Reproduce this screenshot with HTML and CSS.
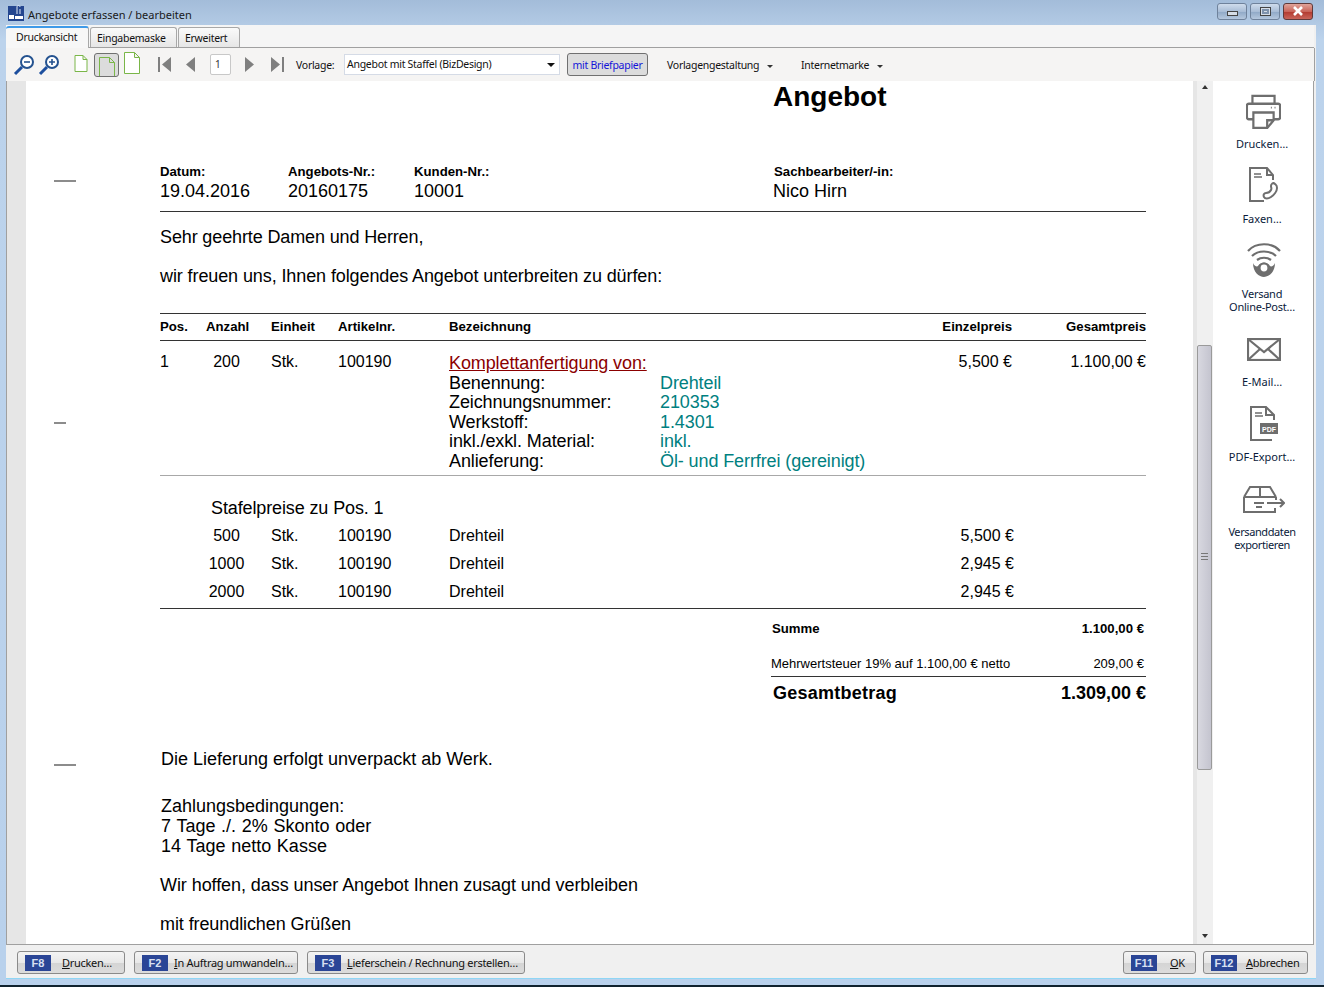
FILE: index.html
```html
<!DOCTYPE html>
<html lang="de">
<head>
    <meta charset="UTF-8">
    <title>Angebote erfassen / bearbeiten</title>
    <link rel="stylesheet" href="styles.css">
</head>
<body>
<div class="window">
    <div class="titlebar">
        <svg class="app-icon" width="16" height="16" viewBox="0 0 16 16"><rect y="1" width="16" height="15" fill="#24468f"/><path d="M9 9V2c0-2 3-2 3 0M12 9V4" stroke="#dfe8f5" fill="none"/><rect x="1" y="10" width="5" height="4" fill="#fff"/><rect x="7" y="11" width="8" height="3" fill="#fff"/></svg>
        <span class="title-text">Angebote erfassen / bearbeiten</span>
        <div class="win-buttons">
            <span class="win-btn"><i class="glyph-min"></i></span>
            <span class="win-btn"><i class="glyph-max"></i></span>
            <span class="win-btn win-close">
                <svg width="14" height="10" viewBox="0 0 14 10"><path d="M3 1l8 8M11 1L3 9" stroke="#fff" stroke-width="2.6"/></svg>
            </span>
        </div>
    </div>

    <div class="frame">
        <div class="tabs">
            <span class="tab tab-active">Druckansicht</span>
            <span class="tab tab-input">Eingabemaske</span>
            <span class="tab tab-more">Erweitert</span>
        </div>

        <div class="toolbar">
            <svg class="tool-icon" width="23" height="22" viewBox="0 0 23 22"><circle cx="14" cy="8" r="6" fill="#fff" stroke="#24528f" stroke-width="2"/><path d="M11 8h6" stroke="#24528f" stroke-width="1.6"/><path d="M9 13l-7 7" stroke="#1d4f9e" stroke-width="3"/></svg>
            <svg class="tool-icon" width="23" height="22" viewBox="0 0 23 22"><circle cx="14" cy="8" r="6" fill="#fff" stroke="#24528f" stroke-width="2"/><path d="M11 8h6M14 5v6" stroke="#24528f" stroke-width="1.6"/><path d="M9 13l-7 7" stroke="#1d4f9e" stroke-width="3"/></svg>
            <svg class="page-small" width="14" height="17" viewBox="0 0 14 17"><path d="M1 .5h8l4 4v12H1z M9 .5v4h4" fill="#fff" stroke="#7ab648"/></svg>
            <span class="page-toggle">
                <svg width="16" height="22" viewBox="0 0 16 22"><path d="M.5 3.500h10l5 5v14H.5z M10.500 3.500v5h5" fill="none" stroke="#7ab648"/></svg>
            </span>
            <svg class="page-large" width="16" height="22" viewBox="0 0 16 22"><path d="M.5.5h10l5 5v16H.5z M10.500.5v5h5" fill="#fff" stroke="#7ab648"/></svg>

            <svg class="nav-first" width="14" height="15" viewBox="0 0 14 15"><path d="M0 0h2v15H0z M13 0v15L4 7.500z" fill="#7f7f7f"/></svg>
            <svg class="nav-prev" width="9" height="15" viewBox="0 0 9 15"><path d="M9 0v15L0 7.500z" fill="#7f7f7f"/></svg>
            <span class="page-input">1</span>
            <svg class="nav-next" width="9" height="15" viewBox="0 0 9 15"><path d="M0 0v15l9-7.500z" fill="#7f7f7f"/></svg>
            <svg class="nav-last" width="14" height="15" viewBox="0 0 14 15"><path d="M12 0h2v15h-2z M1 0v15l9-7.500z" fill="#7f7f7f"/></svg>

            <span class="tool-label">Vorlage:</span>
            <span class="combo">Angebot mit Staffel (BizDesign)<i class="caret-big"></i></span>
            <span class="letterhead-btn">mit Briefpapier</span>
            <span class="menu-btn menu-design">Vorlagengestaltung<i class="caret"></i></span>
            <span class="menu-btn">Internetmarke<i class="caret"></i></span>
        </div>

        <div class="main">
            <div class="doc-gutter"></div>
            <div class="doc">
                <i class="fold fold-1"></i>
                <i class="fold fold-2"></i>
                <i class="fold fold-3"></i>

                <div class="doc-title">Angebot</div>

                <div class="meta">
                    <div><b>Datum:</b><span>19.04.2016</span></div>
                    <div><b>Angebots-Nr.:</b><span>20160175</span></div>
                    <div><b>Kunden-Nr.:</b><span>10001</span></div>
                    <div><b class="meta-clerk">Sachbearbeiter/-in:</b><span>Nico Hirn</span></div>
                </div>

                <p class="salutation">Sehr geehrte Damen und Herren,</p>
                <p class="intro">wir freuen uns, Ihnen folgendes Angebot unterbreiten zu dürfen:</p>

                <div class="pos-row pos-head">
                    <span>Pos.</span><span>Anzahl</span><span>Einheit</span><span>Artikelnr.</span><span>Bezeichnung</span>
                    <span class="right">Einzelpreis</span><span class="right">Gesamtpreis</span>
                </div>

                <div class="pos-row pos-main">
                    <span>1</span><span class="qty">200</span><span>Stk.</span><span>100190</span>
                    <div class="desc">
                        <div class="desc-head">Komplettanfertigung von:</div>
                        <dl class="desc-list">
                            <dt>Benennung:</dt><dd>Drehteil</dd>
                            <dt>Zeichnungsnummer:</dt><dd>210353</dd>
                            <dt>Werkstoff:</dt><dd>1.4301</dd>
                            <dt>inkl./exkl. Material:</dt><dd>inkl.</dd>
                            <dt>Anlieferung:</dt><dd>Öl- und Ferrfrei (gereinigt)</dd>
                        </dl>
                    </div>
                    <span class="right">5,500 €</span><span class="right">1.100,00 €</span>
                </div>

                <div class="staffel">
                    <div class="staffel-title">Stafelpreise zu Pos. 1</div>
                    <div class="pos-row staffel-row"><span></span><span class="qty">500</span><span>Stk.</span><span>100190</span><span>Drehteil</span><span class="right price-off">5,500 €</span><span></span></div>
                    <div class="pos-row staffel-row"><span></span><span class="qty">1000</span><span>Stk.</span><span>100190</span><span>Drehteil</span><span class="right price-off">2,945 €</span><span></span></div>
                    <div class="pos-row staffel-row"><span></span><span class="qty">2000</span><span>Stk.</span><span>100190</span><span>Drehteil</span><span class="right price-off">2,945 €</span><span></span></div>
                </div>

                <div class="totals">
                    <div class="total-row total-sum"><span>Summe</span><span>1.100,00 €</span></div>
                    <div class="total-row total-tax"><span>Mehrwertsteuer 19% auf 1.100,00 € netto</span><span>209,00 €</span></div>
                    <div class="total-row total-grand"><span class="grand-label">Gesamtbetrag</span><span>1.309,00 €</span></div>
                </div>

                <div class="closing">
                    <p class="closing-1">Die Lieferung erfolgt unverpackt ab Werk.</p>
                    <p class="closing-2">Zahlungsbedingungen:<br>7 Tage ./. 2% Skonto oder<br>14 Tage netto Kasse</p>
                    <p class="closing-3">Wir hoffen, dass unser Angebot Ihnen zusagt und verbleiben</p>
                    <p class="closing-4">mit freundlichen Grüßen</p>
                </div>
            </div>

            <div class="scrollbar">
                <i class="arrow-up"></i>
                <div class="thumb"><i class="grip"></i></div>
                <i class="arrow-down"></i>
            </div>

            <div class="actions">
                <div class="action action-print">
                    <svg width="35" height="35" viewBox="0 0 38 36" preserveAspectRatio="none" fill="none" stroke="#6e6e6e" stroke-width="2.400"><path d="M7 10V2h24v8"/><path d="M8 26H3a2 2 0 0 1-2-2V12a2 2 0 0 1 2-2h32a2 2 0 0 1 2 2v12a2 2 0 0 1-2 2h-5"/><path d="M8 19h22v8l-7 8H8z"/><path d="M23 35v-8h7"/><path d="M27 14h1M31 14h1" stroke-width="2"/></svg>
                    <span>Drucken…</span>
                </div>
                <div class="action action-fax">
                    <svg width="32" height="36" viewBox="0 0 32 36" fill="none" stroke="#6e6e6e" stroke-width="2"><path d="M16 34H2V1h17l6 7v5"/><path d="M19 1v7h6"/><path d="M6 7h7M6 10h8" stroke-width="1.500"/><path d="M27 17c-2-2-4 0-4 2s1 2 0 4-3 3-5 3-3 2-2 4 4 2 7 0 6-6 6-9-1-3-2-4z"/></svg>
                    <span>Faxen…</span>
                </div>
                <div class="action action-post">
                    <svg width="34" height="36" viewBox="0 0 34 36" fill="none" stroke="#6e6e6e" stroke-width="2.200"><path d="M1 9C9 0 25 0 33 9"/><path d="M5 14c6-6 18-6 24 0"/><path d="M10 18c4-3 10-3 14 0"/><path d="M6 21c0 9 6 14 11 14s11-5 11-14c-1 3-4 4-5 3a7 7 0 0 0-12 0c-1 1-4 0-5-3z" fill="#6e6e6e" stroke="none"/><circle cx="17" cy="26" r="4.500" fill="#fff" stroke="#6e6e6e"/></svg>
                    <span>Versand<br>Online-Post…</span>
                </div>
                <div class="action action-mail">
                    <svg width="34" height="23" viewBox="0 0 34 23" fill="none" stroke="#6e6e6e" stroke-width="2.200"><rect x="1" y="1" width="32" height="21"/><path d="M1 1l16 13L33 1M1 22l12-11M33 22L21 11"/></svg>
                    <span>E-Mail…</span>
                </div>
                <div class="action action-pdf">
                    <svg width="28" height="35" viewBox="0 0 28 35" fill="none" stroke="#6e6e6e" stroke-width="2"><path d="M22 34H1V1h15l8 8v5"/><path d="M16 1v8h8"/><path d="M5 7h7M5 10h8" stroke-width="1.500"/><rect x="10" y="17" width="18" height="11" fill="#6e6e6e" stroke="none"/><text x="19" y="25.500" class="pdf-tag">PDF</text></svg>
                    <span>PDF-Export…</span>
                </div>
                <div class="action action-ship">
                    <svg width="42" height="28" viewBox="0 0 42 28" fill="none" stroke="#6e6e6e" stroke-width="2"><path d="M1 11L7 1h20l6 10"/><path d="M17 1v10M1 11h32"/><path d="M1 11v15h31v-4M33 11v3"/><path d="M11 17h10M13 21h6M24 17h17M37 13l4 4-4 4"/></svg>
                    <span>Versanddaten<br>exportieren</span>
                </div>
            </div>
        </div>

        <div class="footer">
            <span class="fkey-btn btn-print"><b>F8</b><span><u>D</u>rucken…</span></span>
            <span class="fkey-btn btn-order"><b>F2</b><span><u>I</u>n Auftrag umwandeln…</span></span>
            <span class="fkey-btn btn-invoice"><b>F3</b><span><u>L</u>ieferschein / Rechnung erstellen…</span></span>
            <span class="fkey-btn btn-ok"><b>F11</b><span><u>O</u>K</span></span>
            <span class="fkey-btn btn-cancel"><b>F12</b><span><u>A</u>bbrechen</span></span>
        </div>
    </div>
</div>
</body>
</html>
```

FILE: styles.css
```css
* {
    box-sizing: border-box;
}
html, body {
    margin: 0;
    padding: 0;
}
body {
    width: 1324px;
    height: 987px;
    overflow: hidden;
    font-family: "Noto Sans", sans-serif;
    font-size: 11px;
    color: #111;
}
.window {
    height: 987px;
    display: flex;
    flex-direction: column;
    background: linear-gradient(180deg, #a3bcd9 0, #bcd3ec 40px, #b9d1ec 100%);
    padding: 0 8px 6px 6px;
    border-bottom: 2px solid #10222e;
}
.titlebar {
    height: 25px;
    flex: none;
    display: flex;
    align-items: center;
    padding: 0 3px 0 2px;
}
.app-icon {
    margin-right: 4px;
}
.title-text {
    font-size: 11px;
    color: #1a1a1a;
    margin-top: 3px;
}
.win-buttons {
    margin-left: auto;
    margin-top: -3px;
    display: flex;
    gap: 3px;
}
.win-btn {
    width: 30px;
    height: 17px;
    border: 1px solid #6f829b;
    border-radius: 3px;
    background: linear-gradient(180deg, #cfdcec, #a9bdd6 50%, #8fa8c6 52%, #b5c8de);
    display: flex;
    align-items: center;
    justify-content: center;
}
.win-close {
    border-color: #5f3a3a;
    background: linear-gradient(180deg, #e0a49a, #c9655a 50%, #b23a2f 52%, #c9655a);
}
.glyph-min {
    width: 11px;
    height: 5px;
    margin-top: 5px;
    background: #d6dde6;
    border: 1px solid #444;
}
.glyph-max {
    width: 11px;
    height: 9px;
    background: #d6dde6;
    border: 1px solid #444;
    box-shadow: inset 0 0 0 1px #d6dde6, inset 0 0 0 3px #7e92ac;
}
.frame {
    flex: 1;
    min-height: 0;
    display: flex;
    flex-direction: column;
    background: #f0f0f0;
    border-bottom: 1px solid #8fd6f5;
}

/* tabs */
.tabs {
    height: 23px;
    flex: none;
    display: flex;
    align-items: flex-end;
    background: #f5f5f5;
    gap: 1px;
    border-bottom: 1px solid #a0a0a0;
    margin-right: 2px;
    font-size: 10.5px;
    letter-spacing: -0.28px;
}
.tab {
    height: 20px;
    padding-left: 6px;
    line-height: 20px;
    background: linear-gradient(180deg, #fafafa, #e6e6e6);
    border: 1px solid #a8a8a8;
    border-bottom: none;
    border-radius: 3px 3px 0 0;
}
.tab-active {
    height: 22px;
    width: 83px;
    padding-left: 10px;
    background: #f7f7f7;
    border: none;
    border-top: 2px solid #3f9ae8;
    border-right: 1px solid #a8a8a8;
    margin-bottom: -1px;
    line-height: 19px;
}
.tab-input {
    width: 87px;
}
.tab-more {
    width: 62px;
}
.toolbar {
    height: 33px;
    flex: none;
    display: flex;
    align-items: center;
    background: #f5f4f3;
    border-right: 1px solid #a0a0a0;
    margin-right: 1px;
    padding-left: 7px;
    font-size: 10.5px;
    letter-spacing: -0.28px;
}
.tool-icon {
    margin-right: 2px;
}
.page-small {
    margin-left: 11px;
    margin-top: -2px;
}
.page-toggle {
    width: 25px;
    height: 24px;
    margin-left: 6px;
    border: 1px solid #707070;
    border-radius: 3px;
    background: #dcdcdc;
    display: flex;
    justify-content: center;
    overflow: hidden;
}
.page-large {
    margin-left: 5px;
    margin-top: -3px;
}
.nav-first {
    margin-left: 18px;
}
.nav-prev {
    margin-left: 14px;
}
.page-input {
    width: 21px;
    height: 21px;
    margin-left: 15px;
    background: #fff;
    border: 1px solid #c8c8c8;
    border-radius: 2px;
    font-size: 10px;
    line-height: 19px;
    padding-left: 4px;
    color: #333;
}
.nav-next {
    margin-left: 14px;
}
.nav-last {
    margin-left: 16px;
}
.tool-label {
    width: 40px;
    margin-left: 12px;
}
.combo {
    position: relative;
    width: 216px;
    height: 21px;
    margin-left: 8px;
    background: #fff;
    border: 1px solid #d5dbe6;
    line-height: 18px;
    padding-left: 2px;
}
.caret-big {
    position: absolute;
    right: 4px;
    top: 8px;
    border: 4px solid transparent;
    border-top: 4px solid #111;
    border-bottom: none;
}
.letterhead-btn {
    width: 81px;
    height: 23px;
    margin-left: 7px;
    border: 1px solid #707070;
    border-radius: 3px;
    background: #dcdcdc;
    color: #1414d8;
    text-align: center;
    line-height: 22px;
}
.menu-btn {
    white-space: nowrap;
}
.menu-design {
    width: 134px;
    margin-left: 19px;
}
.caret {
    display: inline-block;
    margin-left: 8px;
    margin-bottom: 1px;
    border: 3px solid transparent;
    border-top: 3px solid #333;
    border-bottom: none;
}

/* main area */
.main {
    height: 864px;
    flex: none;
    display: flex;
    overflow: hidden;
    background: #fff;
    border-right: 1px solid #a0a0a0;
    border-bottom: 1px solid #a0a0a0;
    border-left: 1px solid #a0a0a0;
    margin-right: 2px;
}
.doc-gutter {
    width: 19px;
    flex: none;
    background: #e6e6e6;
}
.doc {
    position: relative;
    width: 1167px;
    flex: none;
    padding-left: 134px;
    padding-right: 47px;
    font-family: "Liberation Sans", Arial, sans-serif;
    font-size: 18px;
    color: #000;
    background: #fff;
}
.fold {
    position: absolute;
    height: 2px;
    background: #8c8c8c;
    left: 28px;
    width: 22px;
}
.fold-1 { top: 99px; }
.fold-2 { top: 341px; width: 12px; }
.fold-3 { top: 683px; }
.doc-title {
    height: 32px;
    margin-left: 613px;
    font-size: 28px;
    font-weight: bold;
    line-height: 32px;
}
.meta {
    margin-top: 50px;
    height: 49px;
    display: grid;
    grid-template-columns: 128px 126px 359px 1fr;
    border-bottom: 1px solid #333;
}
.meta div {
    display: flex;
    flex-direction: column;
}
.meta b {
    font-size: 13.2px;
    line-height: 18px;
}
.meta .meta-clerk {
    margin-left: 1px;
}
.meta span {
    line-height: 20px;
}
.salutation {
    margin: 15px 0 0;
    line-height: 20px;
    letter-spacing: -0.13px;
}
.intro {
    margin: 19px 0 0;
    line-height: 20px;
    letter-spacing: -0.1px;
}
.pos-row {
    display: grid;
    grid-template-columns: 46px 65px 67px 111px 1fr 120px 134px;
    font-size: 16px;
}
.right {
    text-align: right;
}
.pos-head {
    margin-top: 27px;
    height: 28px;
    border-top: 1px solid #333;
    border-bottom: 1px solid #333;
    font-size: 13.2px;
    font-weight: bold;
    line-height: 26px;
}
.pos-main {
    padding-top: 11px;
    height: 135px;
    line-height: 20px;
    border-bottom: 1px solid #a8a8a8;
}
.qty {
    text-align: center;
    margin-right: 24px;
}
.desc {
    font-size: 18px;
    letter-spacing: -0.1px;
}
.desc-head {
    color: #8b0000;
    text-decoration: underline;
    margin-top: 1px;
    line-height: 20.500px;
}
.desc-list {
    margin: 0;
    display: grid;
    grid-template-columns: 211px 1fr;
    line-height: 19.500px;
    white-space: nowrap;
}
.desc-list dd {
    margin: 0;
    color: #008080;
}
.staffel {
    height: 133px;
    padding-top: 22px;
    border-bottom: 1px solid #333;
}
.staffel-title {
    margin-left: 51px;
    line-height: 20px;
    margin-bottom: 4px;
    letter-spacing: -0.12px;
}
.staffel-row {
    height: 28px;
    line-height: 28px;
}
.price-off {
    margin-right: -2px;
}
.totals {
    margin-left: 611px;
}
.total-row {
    display: flex;
    justify-content: space-between;
}
.total-sum {
    height: 40px;
    padding: 11px 2px 0 1px;
    font-size: 13.2px;
    font-weight: bold;
    line-height: 18px;
}
.total-tax {
    height: 28px;
    padding: 6px 2px 0 0;
    font-size: 13px;
    line-height: 18px;
    border-bottom: 1px solid #333;
}
.total-grand {
    padding: 4px 0 0 2px;
    font-size: 18px;
    font-weight: bold;
    line-height: 24px;
}
.grand-label {
    letter-spacing: 0.25px;
}
.closing p {
    margin: 0;
    line-height: 20px;
}
.closing .closing-1 {
    padding-left: 1px;
    margin-top: 44px;
}
.closing .closing-2 {
    padding-left: 1px;
    margin-top: 27px;
    word-spacing: 0.7px;
}
.closing .closing-3 {
    margin-top: 19px;
    letter-spacing: -0.07px;
}
.closing .closing-4 {
    margin-top: 19px;
    letter-spacing: -0.09px;
}

/* scrollbar */
.scrollbar {
    position: relative;
    width: 20px;
    flex: none;
    background: #f0f0f0;
    border-left: 4px solid #e6e6e6;
}
.thumb {
    position: absolute;
    left: 0;
    top: 264px;
    width: 15px;
    height: 425px;
    background: linear-gradient(90deg, #d8d8e0, #c4c4cf);
    border: 1px solid #9a9a9a;
    border-radius: 2px;
}
.grip {
    position: absolute;
    left: 3px;
    top: 207px;
    width: 7px;
    height: 7px;
    border-top: 1px solid #777;
    border-bottom: 1px solid #777;
    background: linear-gradient(#777, #777) center / 100% 1px no-repeat;
}
.arrow-up, .arrow-down {
    position: absolute;
    left: 5px;
    border: 3.500px solid transparent;
}
.arrow-up {
    top: 4px;
    border-bottom: 4px solid #333;
    border-top: none;
}
.arrow-down {
    bottom: 6px;
    border-top: 4px solid #333;
    border-bottom: none;
}

/* right action panel */
.actions {
    flex: 1;
    position: relative;
    background: #fff;
}
.action {
    position: absolute;
    left: 0;
    right: 2px;
    display: flex;
    flex-direction: column;
    align-items: center;
    text-align: center;
    line-height: 13px;
    color: #0a1a3a;
}
.action svg {
    margin-left: 3px;
}
.action span {
    position: absolute;
}
.action-print { top: 13px; }
.action-print span { top: 43px; }
.action-fax { top: 86px; }
.action-fax span { top: 45px; }
.action-post { top: 161px; }
.action-post span { top: 45px; letter-spacing: -0.25px; }
.action-mail { top: 257px; }
.action-mail span { top: 37px; }
.action-pdf { top: 325px; }
.action-pdf span { top: 44px; }
.action-ship { top: 405px; }
.action-ship span { top: 39px; letter-spacing: -0.4px; }
.pdf-tag {
    font-family: "Liberation Sans", sans-serif;
    font-size: 7px;
    font-weight: bold;
    fill: #fff;
    stroke: none;
    text-anchor: middle;
}

/* footer buttons */
.footer {
    flex: 1;
    display: flex;
    align-items: center;
    padding: 2px 8px 0 11px;
    background: #f0f0f0;
    letter-spacing: -0.3px;
}
.fkey-btn {
    height: 23px;
    display: flex;
    align-items: center;
    padding: 0 7px;
    border: 1px solid #8a8a8a;
    border-radius: 3px;
    background: linear-gradient(180deg, #f4f4f4, #e8e8e8 50%, #d4d4d4 52%, #dcdcdc);
    white-space: nowrap;
    color: #111;
}
.fkey-btn b {
    flex: none;
    width: 26px;
    height: 16px;
    background: #2a4596;
    color: #d8e0f2;
    font-family: "Liberation Sans", sans-serif;
    font-size: 11px;
    line-height: 16px;
    text-align: center;
    letter-spacing: 0;
}
.btn-print { width: 108px; }
.btn-print span { margin-left: 11px; }
.btn-order { width: 164px; margin-left: 9px; }
.btn-order span { margin-left: 6px; }
.btn-invoice { width: 218px; margin-left: 9px; }
.btn-invoice span { margin-left: 6px; }
.btn-ok { width: 73px; margin-left: auto; }
.btn-ok span { margin-left: 13px; }
.btn-cancel { width: 105px; margin-left: 7px; }
.btn-cancel span { margin-left: 9px; }
```
